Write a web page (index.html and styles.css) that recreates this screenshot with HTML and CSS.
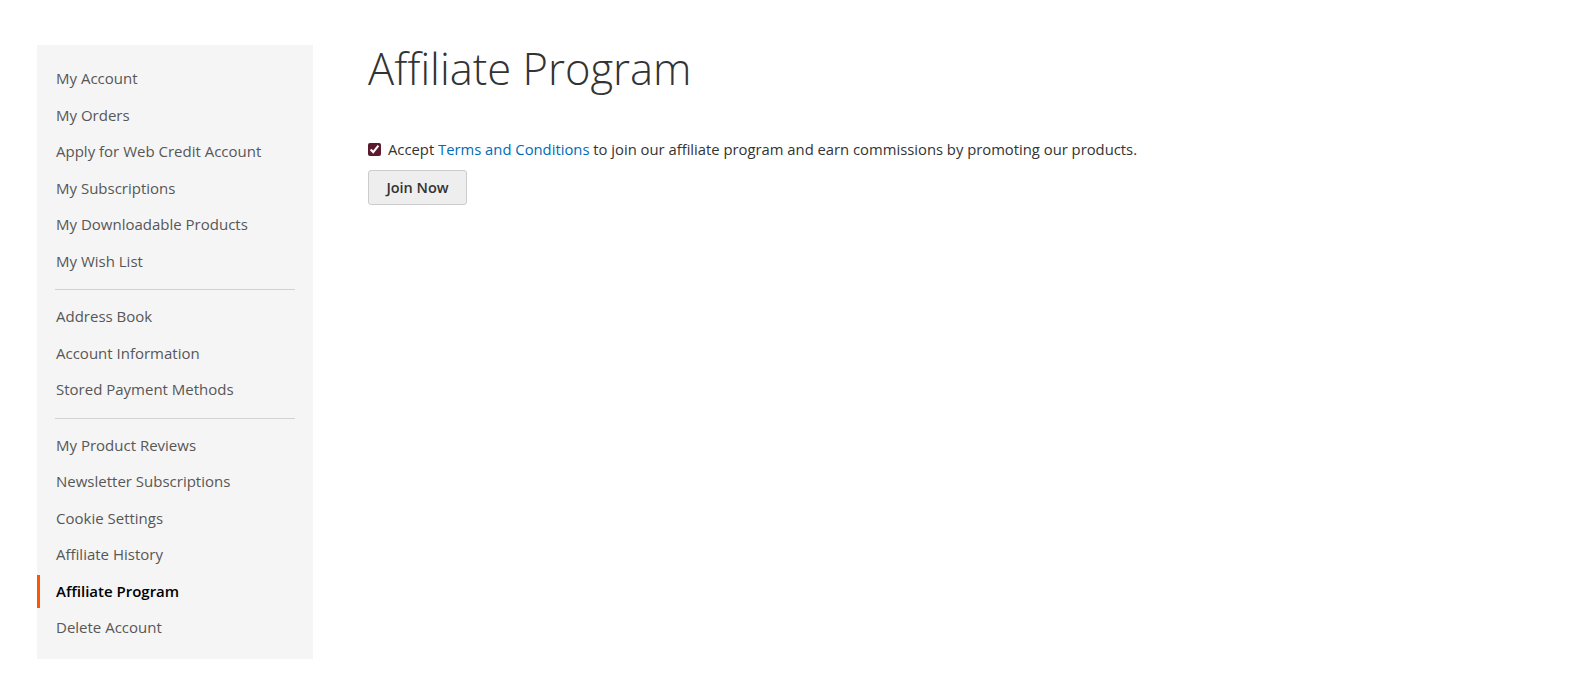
FILE: index.html
```html
<!DOCTYPE html>
<html lang="en">
<head>
<meta charset="utf-8">
<title>Affiliate Program</title>
<link rel="stylesheet" href="styles.css">
</head>
<body>
<div class="page">
  <aside class="sidebar">
    <ul class="nav">
      <li class="item"><a href="#">My Account</a></li>
      <li class="item"><a href="#">My Orders</a></li>
      <li class="item"><a href="#">Apply for Web Credit Account</a></li>
      <li class="item"><a href="#">My Subscriptions</a></li>
      <li class="item"><a href="#">My Downloadable Products</a></li>
      <li class="item"><a href="#">My Wish List</a></li>
      <li class="item"><span class="delimiter"></span></li>
      <li class="item"><a href="#">Address Book</a></li>
      <li class="item"><a href="#">Account Information</a></li>
      <li class="item"><a href="#">Stored Payment Methods</a></li>
      <li class="item"><span class="delimiter"></span></li>
      <li class="item"><a href="#">My Product Reviews</a></li>
      <li class="item"><a href="#">Newsletter Subscriptions</a></li>
      <li class="item"><a href="#">Cookie Settings</a></li>
      <li class="item"><a href="#">Affiliate History</a></li>
      <li class="item current"><strong>Affiliate Program</strong></li>
      <li class="item"><a href="#">Delete Account</a></li>
    </ul>
  </aside>
  <main class="main">
    <h1 class="title">Affiliate Program</h1>
    <form class="join-form">
      <label class="accept">
        <input type="checkbox" checked>
        <span>Accept <a href="#" class="link">Terms and Conditions</a> to join our affiliate program and earn commissions by promoting our products.</span>
      </label>
      <button type="button" class="btn">Join Now</button>
    </form>
  </main>
</div>
</body>
</html>
```
FILE: styles.css
```css
html, body {
  margin: 0;
  padding: 0;
  background: #fff;
}
body {
  font-family: "Open Sans", "Liberation Sans", sans-serif;
  font-size: 15px;
  color: #333;
}
.page {
  display: flex;
  align-items: flex-start;
  padding: 45px 0 0 37px;
  gap: 55px;
}
.sidebar {
  width: 276px;
  flex: none;
  background: #f5f5f5;
  padding: 17px 0 14px;
}
.nav {
  list-style: none;
  margin: 0;
  padding: 0;
}
.item {
  margin: 3px 0 0;
}
.item:first-child {
  margin-top: 0;
}
.item a,
.item strong {
  display: block;
  padding: 5px 18px 5px 16px;
  border-left: 3px solid transparent;
  color: #575757;
  text-decoration: none;
  line-height: 23.5px;
  font-size: 15px;
}
.item.current strong {
  border-left-color: #ff5501;
  color: #000;
  font-weight: 600;
}
.delimiter {
  display: block;
  border-top: 1px solid #d1d1d1;
  margin: 11px 18px 10px;
}
.main {
  flex: 1;
  min-width: 0;
}
.title {
  margin: 0;
  font-size: 43.5px;
  font-weight: 300;
  line-height: 48px;
  color: #333;
}
.join-form {
  margin-top: 46px;
  display: flex;
  flex-direction: column;
  align-items: flex-start;
  gap: 11px;
}
.accept {
  display: flex;
  align-items: center;
  gap: 7px;
  font-size: 14.8px;
  line-height: 20px;
  color: #333;
}
.accept input {
  margin: 0;
  width: 13px;
  height: 13px;
  accent-color: #5b1a2d;
}
.link {
  color: #006bb4;
  text-decoration: none;
}
.btn {
  font-family: inherit;
  font-size: 14.5px;
  font-weight: 600;
  color: #333;
  background: #eee;
  border: 1px solid #ccc;
  border-radius: 3px;
  padding: 6px 15px;
  line-height: 19px;
  height: 35px;
  width: 99px;
}
```
